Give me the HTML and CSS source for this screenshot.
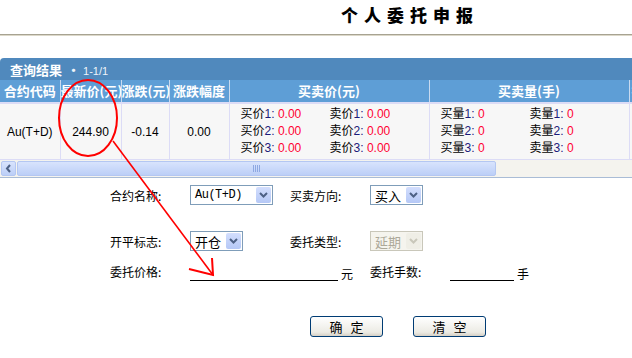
FILE: index.html
```html
<!DOCTYPE html>
<html>
<head>
<meta charset="utf-8">
<title>个人委托申报</title>
<link rel="stylesheet" href="styles.css">
</head>
<body>
<div class="page">
	<h1 class="title">个人委托申报</h1>

	<div class="panel">
		<div class="panel-bar"><b>查询结果</b><span class="count"><b>·</b> 1-1/1</span></div>
		<div class="grid-wrap">
			<table class="grid">
				<colgroup>
					<col style="width:60px"><col style="width:61px"><col style="width:48px"><col style="width:60px">
					<col style="width:200px"><col style="width:200px"><col style="width:100px">
				</colgroup>
				<tr>
					<th>合约代码</th>
					<th>最新价(元)</th>
					<th>涨跌(元)</th>
					<th>涨跌幅度</th>
					<th>买卖价(元)</th>
					<th>买卖量(手)</th>
					<th class="cut">持仓量</th>
				</tr>
				<tr>
					<td>Au(T+D)</td>
					<td>244.90</td>
					<td>-0.14</td>
					<td>0.00</td>
					<td>
						<div class="quote">
							<span>买价<i class="n">1:</i> <i class="v">0.00</i></span>
							<span>卖价<i class="n">1:</i> <i class="v">0.00</i></span>
							<span>买价<i class="n">2:</i> <i class="v">0.00</i></span>
							<span>卖价<i class="n">2:</i> <i class="v">0.00</i></span>
							<span>买价<i class="n">3:</i> <i class="v">0.00</i></span>
							<span>卖价<i class="n">3:</i> <i class="v">0.00</i></span>
						</div>
					</td>
					<td>
						<div class="quote">
							<span>买量<i class="n">1:</i> <i class="v">0</i></span>
							<span>卖量<i class="n">1:</i> <i class="v">0</i></span>
							<span>买量<i class="n">2:</i> <i class="v">0</i></span>
							<span>卖量<i class="n">2:</i> <i class="v">0</i></span>
							<span>买量<i class="n">3:</i> <i class="v">0</i></span>
							<span>卖量<i class="n">3:</i> <i class="v">0</i></span>
						</div>
					</td>
					<td></td>
				</tr>
			</table>
		</div>
		<div class="hscroll">
			<span class="sb-btn"><svg width="7" height="9" viewBox="0 0 7 9"><polyline points="5,1 2,4.5 5,8" fill="none" stroke="#4d6185" stroke-width="2"/></svg></span>
			<span class="sb-thumb"><span class="grip"></span></span>
		</div>
	</div>

	<form class="order">
		<div class="row r1">
			<label class="lbl">合约名称:</label>
			<span class="slot">
				<span class="select w83"><span class="mono">Au(T+D)</span><span class="sel-btn"><svg width="9" height="6" viewBox="0 0 9 6"><polyline points="1,1 4.5,4.5 8,1" fill="none" stroke="#4d6185" stroke-width="2"/></svg></span></span>
			</span>
			<label class="lbl">买卖方向:</label>
			<span class="select w53"><span>买入</span><span class="sel-btn"><svg width="9" height="6" viewBox="0 0 9 6"><polyline points="1,1 4.5,4.5 8,1" fill="none" stroke="#4d6185" stroke-width="2"/></svg></span></span>
		</div>
		<div class="row r2">
			<label class="lbl">开平标志:</label>
			<span class="slot">
				<span class="select w53"><span>开仓</span><span class="sel-btn"><svg width="9" height="6" viewBox="0 0 9 6"><polyline points="1,1 4.5,4.5 8,1" fill="none" stroke="#4d6185" stroke-width="2"/></svg></span></span>
			</span>
			<label class="lbl">委托类型:</label>
			<span class="select w53 off"><span>延期</span><span class="sel-btn"><svg width="9" height="6" viewBox="0 0 9 6"><polyline points="1,1 4.5,4.5 8,1" fill="none" stroke="#c9c7ba" stroke-width="2"/></svg></span></span>
		</div>
		<div class="row r3">
			<label class="lbl">委托价格:</label>
			<input class="line w148" type="text">
			<span class="unit">元</span>
			<label class="lbl">委托手数:</label>
			<input class="line w64" type="text">
			<span class="unit">手</span>
		</div>
		<div class="buttons">
			<button type="button" class="btn">确定</button>
			<button type="button" class="btn">清空</button>
		</div>
	</form>

	<svg class="mark" width="632" height="358" viewBox="0 0 632 358">
		<ellipse cx="88" cy="118" rx="29" ry="38" fill="none" stroke="#f00" stroke-width="2"/>
		<line x1="113" y1="141" x2="213" y2="275" stroke="#f00" stroke-width="1.6"/>
		<polyline points="212,258 213,275 189,269" fill="none" stroke="#f00" stroke-width="2"/>
	</svg>
</div>
</body>
</html>
```

FILE: styles.css
```css
body {
	margin: 0;
	background: #fff;
	font-family: "Liberation Sans", "Noto Sans CJK SC", sans-serif;
	font-size: 12px;
	color: #000;
}
.page {
	position: relative;
	width: 632px;
	height: 358px;
	overflow: hidden;
}
.title {
	margin: 0;
	height: 34px;
	padding-left: 341px;
	font-family: "Noto Sans CJK SC", sans-serif;
	font-size: 17px;
	font-weight: 900;
	letter-spacing: 6px;
	line-height: 30px;
	border-bottom: 1px solid #a7a392;
	box-shadow: 0 1px 0 #dcd8c9;
}

/* query result panel */
.panel {
	margin-top: 23px;
}
.panel-bar {
	display: flex;
	align-items: center;
	gap: 5px;
	height: 22px;
	padding-left: 10px;
	background: #5089bd;
	border-radius: 4px 0 0 0;
	color: #fff;
}
.panel-bar b {
	font-family: "Noto Sans CJK SC", sans-serif;
	font-size: 13px;
}
.count {
	font-size: 11px;
	color: #eef3f9;
}
.grid-wrap {
	width: 632px;
	overflow: hidden;
}
.grid {
	border-collapse: collapse;
	table-layout: fixed;
	width: 729px;
}
.grid th {
	height: 22px;
	padding: 0;
	background: #5e9ed6;
	color: #fff;
	font-family: "Noto Sans CJK SC", sans-serif;
	font-size: 13px;
	font-weight: bold;
	white-space: nowrap;
	overflow: hidden;
	border-right: 1px solid #c8daf0;
	line-height: 20px;
}
.grid th.cut {
	text-align: left;
	padding-left: 2px;
}
.grid td {
	height: 55px;
	padding: 0;
	background: #f7f7f7;
	text-align: center;
	border-top: 2px solid #dcdcf6;
	border-bottom: 1px solid #dcdcf6;
	border-right: 1px solid #dcdcf6;
	font-size: 12px;
}
.quote {
	display: grid;
	grid-template-columns: 89px auto;
	padding-left: 11px;
	text-align: left;
	line-height: 17px;
}
.quote i {
	font-style: normal;
}
.n {
	color: #1a1a7a;
}
.v {
	color: #ff0033;
}

/* horizontal scrollbar */
.hscroll {
	display: flex;
	align-items: center;
	gap: 1px;
	height: 17px;
	background: #f4f3ee;
	border-bottom: 1px solid #a9bcd6;
}
.sb-btn, .sb-thumb {
	box-sizing: border-box;
	height: 15px;
	border: 1px solid #b4c7f2;
	border-radius: 2px;
	background: linear-gradient(#d8e3fd, #bccff7);
	display: flex;
	align-items: center;
	justify-content: center;
}
.sb-btn {
	width: 15px;
	margin-left: 1px;
}
.sb-thumb {
	width: 479px;
}
.grip {
	width: 7px;
	height: 7px;
	background: repeating-linear-gradient(90deg, #8ea8e2 0 1px, transparent 1px 2px);
}

/* order form */
.order {
	padding-left: 110px;
	margin: 0;
}
.row {
	display: flex;
	align-items: center;
	height: 24px;
}
.r1 {
	margin-top: 5px;
}
.r2 {
	margin-top: 22px;
}
.r3 {
	margin-top: 6px;
}
.lbl {
	width: 80px;
	font-family: "Noto Sans CJK SC", sans-serif;
	font-size: 12px;
}
.slot {
	width: 100px;
}
.select {
	box-sizing: border-box;
	display: inline-flex;
	align-items: center;
	justify-content: space-between;
	height: 20px;
	padding: 0 1px 0 4px;
	border: 1px solid #7f9db9;
	background: #fff;
	font-family: "Noto Sans CJK SC", sans-serif;
	font-size: 13px;
	vertical-align: middle;
}
.w83 {
	width: 83px;
}
.w53 {
	width: 53px;
}
.mono {
	font-family: "Liberation Mono", monospace;
	font-size: 12px;
	letter-spacing: -0.5px;
}
.sel-btn {
	display: flex;
	align-items: center;
	justify-content: center;
	width: 15px;
	height: 16px;
	border-radius: 2px;
	background: linear-gradient(#d3defd, #b5c8f6);
}
.off {
	border-color: #c9c7ba;
	background: #f5f4ee;
	color: #aca899;
}
.off .sel-btn {
	background: #efeee6;
}
.line {
	box-sizing: border-box;
	height: 20px;
	padding: 0;
	border: 0;
	border-bottom: 1px solid #000;
	background: transparent;
	outline: none;
}
.w148 {
	width: 148px;
}
.w64 {
	width: 64px;
}
.unit {
	box-sizing: border-box;
	width: 32px;
	padding-left: 3px;
	font-family: "Noto Sans CJK SC", sans-serif;
	font-size: 12px;
	margin-top: 4px;
}
.buttons {
	display: flex;
	gap: 30px;
	margin-top: 33px;
	padding-left: 200px;
}
.btn {
	box-sizing: border-box;
	width: 73px;
	height: 21px;
	padding: 0 0 0 8px;
	border: 1px solid #003c74;
	border-radius: 3px;
	background: linear-gradient(#ffffff, #ecebe4 80%, #d6d0c5);
	font-family: "Noto Sans CJK SC", sans-serif;
	font-size: 13px;
	letter-spacing: 8px;
	line-height: 17px;
	color: #000;
}

/* red annotation drawn over the page */
.mark {
	position: absolute;
	left: 0;
	top: 0;
	pointer-events: none;
}
```
